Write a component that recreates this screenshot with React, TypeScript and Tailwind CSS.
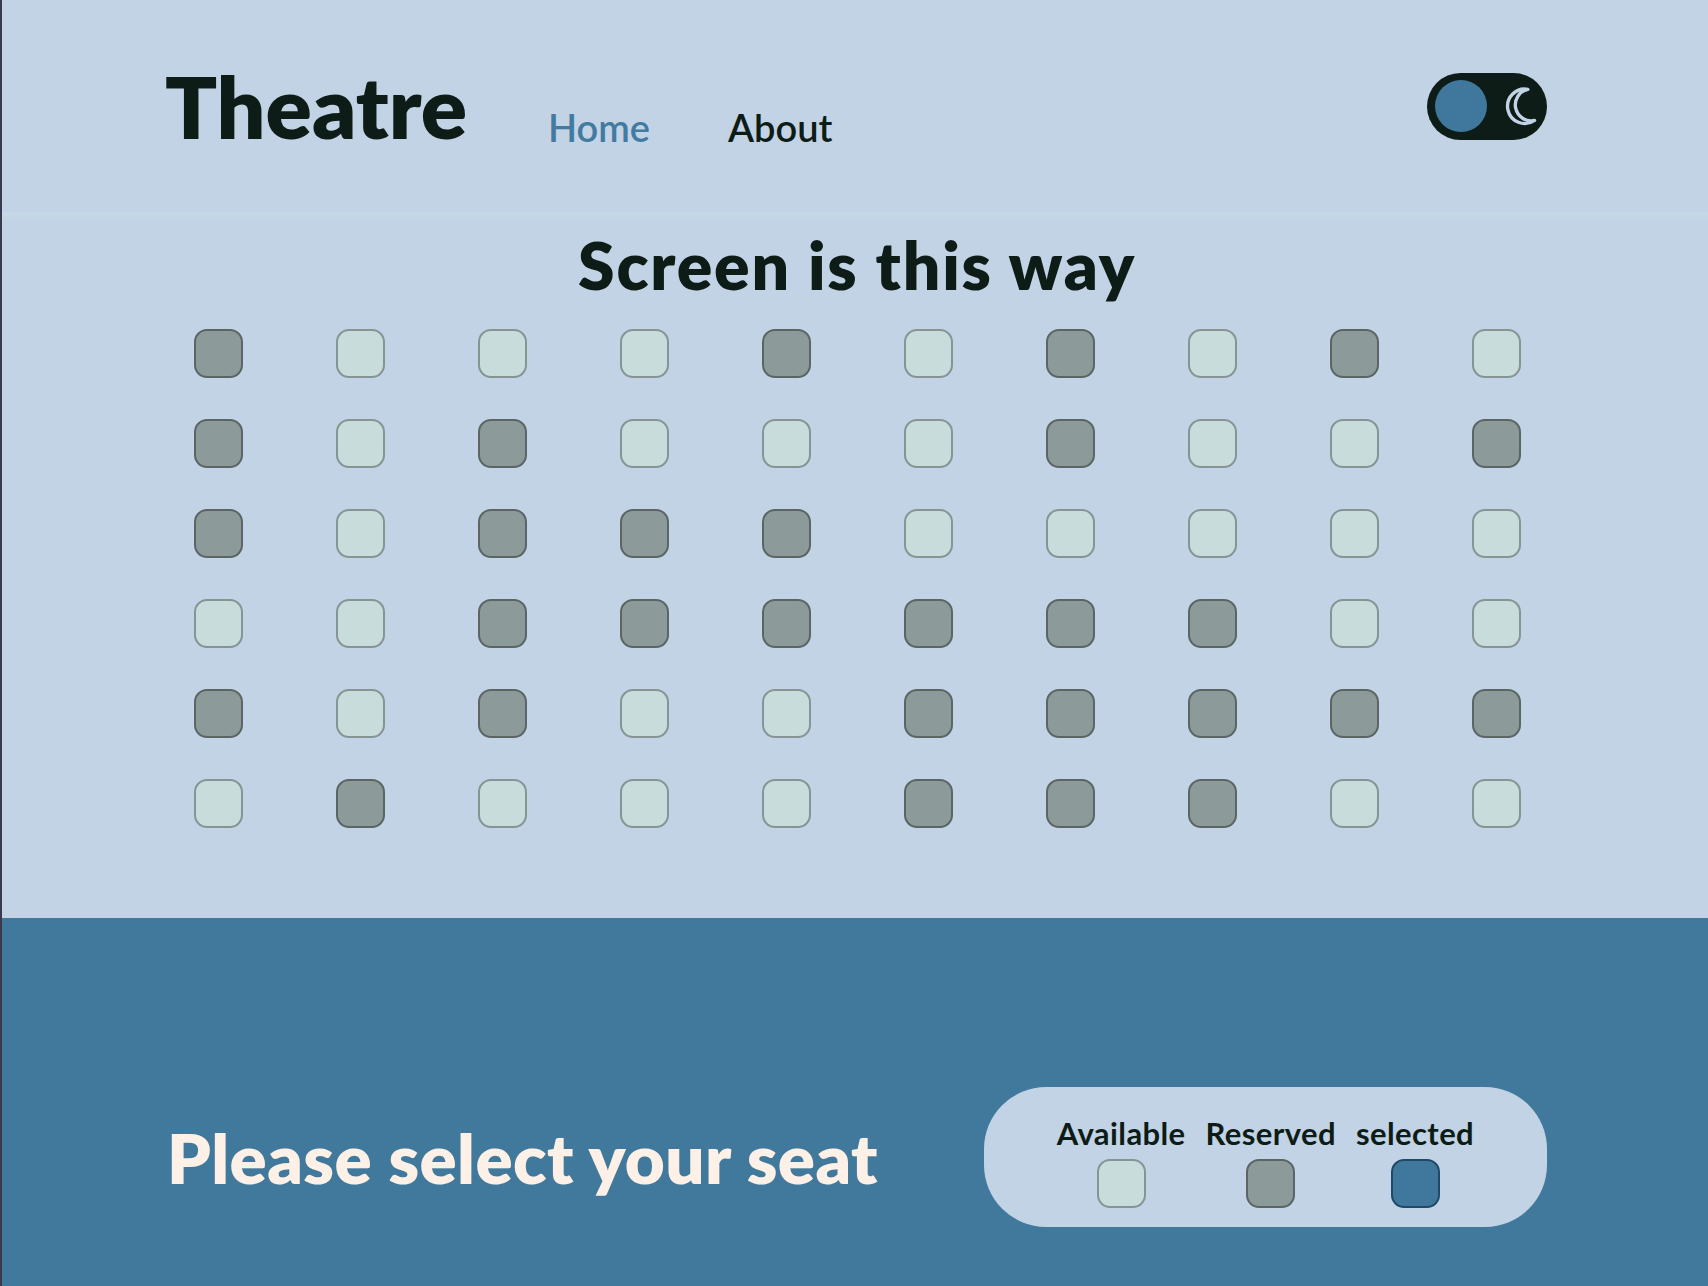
import React from "react";

type SeatKind = "A" | "R" | "S";

const rows: SeatKind[][] = [
  ["R", "A", "A", "A", "R", "A", "R", "A", "R", "A"],
  ["R", "A", "R", "A", "A", "A", "R", "A", "A", "R"],
  ["R", "A", "R", "R", "R", "A", "A", "A", "A", "A"],
  ["A", "A", "R", "R", "R", "R", "R", "R", "A", "A"],
  ["R", "A", "R", "A", "A", "R", "R", "R", "R", "R"],
  ["A", "R", "A", "A", "A", "R", "R", "R", "A", "A"],
];

function Seat({ kind }: { kind: SeatKind }) {
  const cls =
    kind === "R"
      ? "bg-[#8c9b9a] border-[#5a6564]"
      : kind === "S"
      ? "bg-[#3f789c] border-[#1f4a66]"
      : "bg-[#c8dcdb] border-[#869493]";
  return <div className={`w-[49px] h-[49px] rounded-[13px] border-2 ${cls}`} />;
}

function Moon() {
  return (
    <svg width="38" height="40" viewBox="0 0 34 36" fill="none">
      <path
        d="M25 3 A15.5 15.5 0 1 0 31 31 A12 12 0 0 1 25 3 Z"
        stroke="#c2d3e5"
        strokeWidth="3"
        strokeLinejoin="round"
      />
    </svg>
  );
}

export default function App() {
  return (
    <div
      className="min-h-[1286px] border-l-2 border-[#3b3a4a] bg-[#c2d3e5] text-[#0d1c16]"
      style={{ fontFamily: "Lato, 'Noto Sans', sans-serif" }}
    >
      <div className="pl-[4px]">
        <header className="h-[212px] flex items-center">
          <div className="w-[1380px] mx-auto flex items-center justify-between">
            <div className="flex items-baseline">
              <h1 className="text-[86px] leading-none font-extrabold w-[383px] -ml-[2px]">
                Theatre
              </h1>
              <nav className="flex items-baseline gap-[78px] translate-y-[3px]">
                <a className="text-[38px] leading-none font-semibold text-[#427aa0]">Home</a>
                <a className="text-[38px] leading-none font-semibold text-[#0d1c16]">About</a>
              </nav>
            </div>
            <button className="w-[120px] h-[67px] rounded-full bg-[#0d1c16] flex items-center pl-[8px] pr-[9px] justify-between">
              <span className="w-[52px] h-[52px] rounded-full bg-[#3f789c]" />
              <Moon />
            </button>
          </div>
        </header>
      </div>
      <div className="h-[8px] bg-gradient-to-b from-[#c5dbe6] to-[#c2d3e5]" />
      <main className="pt-[12px] pb-[90px] pl-[4px]">
        <h2 className="text-center text-[66px] leading-none font-extrabold tracking-[1.8px]">
          Screen is this way
        </h2>
        <div className="mt-[31px] w-[1327px] mx-auto flex flex-col gap-[41px]">
          {rows.map((row, i) => (
            <div key={i} className="flex justify-between">
              {row.map((k, j) => (
                <Seat key={j} kind={k} />
              ))}
            </div>
          ))}
        </div>
      </main>
      <footer className="h-[368px] bg-[#41799c] flex items-end pb-[59px] pl-[4px]">
        <div className="w-[1380px] mx-auto flex items-center justify-between">
          <p className="text-[69px] leading-none font-extrabold text-[#fdf0e6] tracking-[0.4px]">
            Please select your seat
          </p>
          <div className="w-[563px] h-[140px] rounded-[62px] bg-[#c2d3e5] flex justify-center pt-[31px] gap-[20px]">
            {(
              [
                ["Available", "A"],
                ["Reserved", "R"],
                ["selected", "S"],
              ] as [string, SeatKind][]
            ).map(([label, k]) => (
              <div key={label} className="flex flex-col items-center gap-[10px]">
                <span className="text-[31px] leading-none font-bold tracking-[0.4px]">{label}</span>
                <Seat kind={k} />
              </div>
            ))}
          </div>
        </div>
      </footer>
    </div>
  );
}
